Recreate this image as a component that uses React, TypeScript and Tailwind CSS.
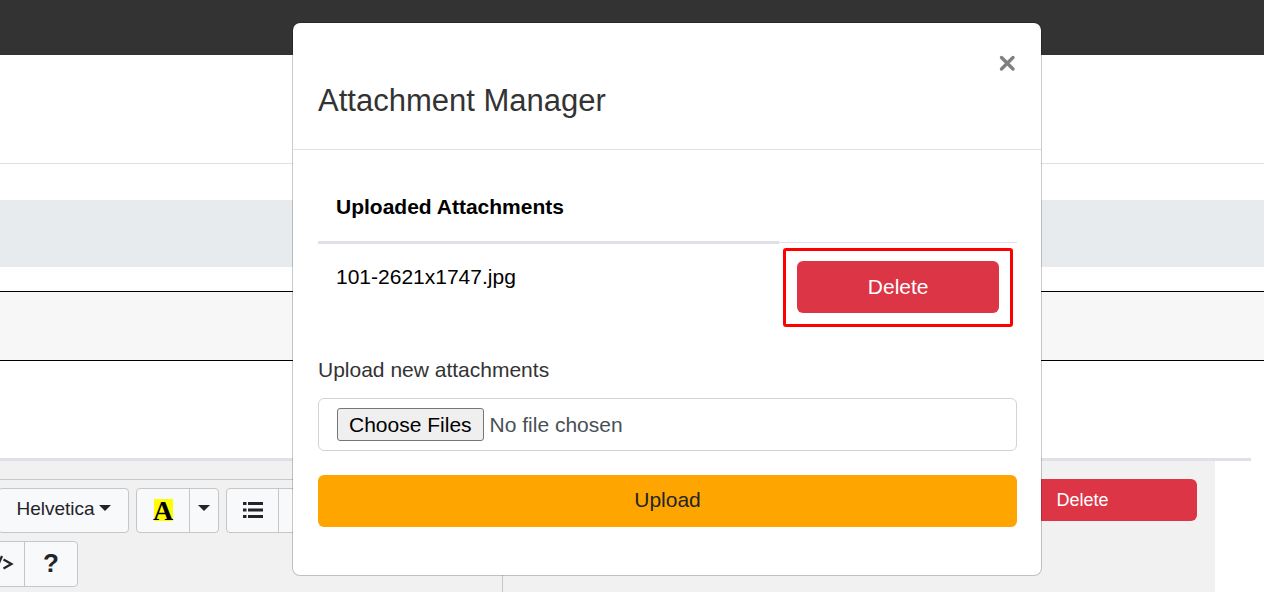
import React from "react";

function Caret() {
  return (
    <svg aria-hidden="true" className="h-1.5 w-3 shrink-0" viewBox="0 0 12 6">
      <path d="M0 0h12L6 6z" fill="currentColor" />
    </svg>
  );
}

function ListIcon() {
  return (
    <svg aria-hidden="true" className="h-[18px] w-5" viewBox="0 0 20 18" fill="currentColor">
      <path d="M0 1h3.500v3H0zM5 1h15v3H5zM0 7.500h3.500v3H0zM5 7.500h15v3H5zM0 14h3.500v3H0zM5 14h15v3H5z" />
    </svg>
  );
}

const group = "flex shrink-0 overflow-hidden border border-[#c4c6c8] bg-[#f8f9fa]";
const tool = "flex items-center justify-center pb-0.5";

function Toolbar() {
  return (
    <div className="flex w-[503px] flex-col gap-2 border-t border-r border-[#c8c8c8] pt-2">
      <div className="flex gap-[7px]">
        <div className={group + " -ml-0.5 h-[45px] w-[131px] rounded"}>
          <button type="button" className={tool + " w-full gap-1 text-[19px]"}>
            Helvetica
            <span className="pb-1"><Caret /></span>
          </button>
        </div>
        <div className={group + " h-[45px] w-[83px] rounded"}>
          <button type="button" aria-label="Recent color" className={tool + " w-[53px] border-r border-[#c4c6c8]"}>
            <span className="flex h-[22px] w-[19px] items-center justify-center bg-[#ffff00] pt-0.5 font-['Liberation_Serif',serif] text-[28px] font-bold leading-none text-black">A</span>
          </button>
          <button type="button" aria-label="More colors" className="flex flex-1 items-center justify-center pb-1.5">
            <Caret />
          </button>
        </div>
        <div className={group + " h-[45px] w-[160px] rounded"}>
          <button type="button" aria-label="Unordered list" className={tool + " w-[52px] border-r border-[#c4c6c8]"}>
            <ListIcon />
          </button>
        </div>
      </div>
      <div className={group + " -ml-7 h-[46px] w-[106px] rounded"}>
        <button type="button" aria-label="Code view" className={tool + " w-[52px] border-r border-[#c4c6c8]"}>
          <svg aria-hidden="true" className="h-[18px] w-8" viewBox="0 0 32 18" fill="none" stroke="currentColor" strokeWidth="2.200">
            <path d="M10 5.500L2 10l8 4.500M19 2l-6 14M20.500 5.500l8 4.500-8 4.500" />
          </svg>
        </button>
        <button type="button" className={tool + " flex-1 text-[26px] font-bold leading-none"}>?</button>
      </div>
    </div>
  );
}

function PageBehind() {
  return (
    <div className="flex min-h-screen flex-col">
      <header className="h-[55px] bg-[#333333]" />
      <div className="h-[109px] border-b border-[#dee2e6]" />
      <div className="mt-9 h-[67px] bg-[#e7ebee]" />
      <div className="mt-6 h-[70px] border-y border-black bg-[#f7f7f7]" />
      <div className="mt-[97px] mr-[13px] flex flex-1 flex-col border-t-[3px] border-[#dee2e6]">
        <div className="mr-9 flex flex-1 justify-between bg-[#f1f1f1] pt-[18px] pr-[18px]">
          <Toolbar />
          <button type="button" className="h-[42px] w-[229px] rounded-md bg-[#dc3545] text-[18px] text-white">
            Delete
          </button>
        </div>
      </div>
    </div>
  );
}

function AttachmentDialog() {
  return (
    <div
      role="dialog"
      aria-labelledby="dialog-title"
      className="w-full max-w-[750px] rounded-lg border border-black/20 bg-white bg-clip-padding"
    >
      <div className="flex flex-col border-b border-[#dee2e6] pt-6 pr-6 pb-[26px] pl-[25px]">
        <button type="button" aria-label="Close" className="flex h-8 w-5 items-center justify-center self-end text-[#808080]">
          <svg aria-hidden="true" className="size-[18px]" viewBox="0 0 18 18" fill="none" stroke="currentColor" strokeWidth="3.400" strokeLinecap="round">
            <path d="M3.500 3.500l11.500 11.500M15 3.500L3.500 15" />
          </svg>
        </button>
        <h1 id="dialog-title" className="text-[31px] leading-[44px]">Attachment Manager</h1>
      </div>
      <div className="pt-6 pr-6 pb-12 pl-[25px] text-[21px] leading-8">
        <table className="w-full border-collapse text-left text-black">
          <thead>
            <tr>
              <th className="w-[66%] border-b-[3px] border-[#dee2e6] px-[18px] pt-[17px] pb-[18px]">Uploaded Attachments</th>
              <td />
            </tr>
          </thead>
          <tbody>
            <tr>
              <td className="border-t border-[#dee2e6] px-[18px] pt-[17px] align-top">101-2621x1747.jpg</td>
              <td className="border-t border-[#dee2e6] px-[18px] py-[18px]">
                <div className="relative">
                  <button type="button" className="block h-[52px] w-full rounded-md bg-[#dc3545] text-white">Delete</button>
                  <div className="pointer-events-none absolute -inset-x-[14px] -top-[13px] -bottom-[14px] rounded-[3px] border-[3px] border-[#ff0000]" />
                </div>
              </td>
            </tr>
          </tbody>
        </table>
        <label htmlFor="files" className="mt-[23px] block">Upload new attachments</label>
        <input
          id="files"
          type="file"
          multiple
          className="mt-3 block h-[53px] w-full rounded-md border border-[#ced4da] px-[18px] py-[9px] text-[#495057] file:mr-1.5 file:h-[33px] file:rounded-[3px] file:border file:border-solid file:border-[#767676] file:bg-[#efefef] file:px-[11px] file:leading-[30px] file:text-black"
        />
        <button type="button" className="mt-6 block h-[52px] w-full rounded-md bg-[#ffa500] pb-0.5 text-[#212529]">Upload</button>
      </div>
    </div>
  );
}

export default function App() {
  return (
    <main className="relative min-h-screen overflow-hidden bg-white font-['Liberation_Sans',Arial,sans-serif] text-[#212529]">
      <PageBehind />
      <div className="absolute inset-0 flex items-start justify-center pt-[22px] pl-[70px] text-[#333333]">
        <AttachmentDialog />
      </div>
    </main>
  );
}
